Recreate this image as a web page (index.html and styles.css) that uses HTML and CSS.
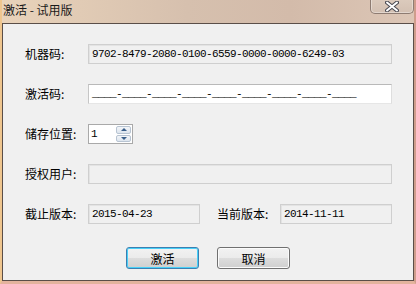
FILE: index.html
```html
<!DOCTYPE html>
<html lang="zh-CN">
<head>
    <meta charset="UTF-8">
    <title>激活 - 试用版</title>
    <link rel="stylesheet" href="styles.css">
</head>
<body>

<div class="window">
    <!-- Title bar -->
    <div class="titlebar">
        <div class="title">激活 - 试用版</div>
        <div class="close-btn">
            <svg width="14" height="11" viewBox="0 0 14 11">
                <path d="M2 1.5 L12 9.5 M12 1.5 L2 9.5" stroke="#4a4a52" stroke-width="4" stroke-linecap="round"/>
                <path d="M2 1.5 L12 9.5 M12 1.5 L2 9.5" stroke="#ffffff" stroke-width="2" stroke-linecap="round"/>
            </svg>
        </div>
    </div>

    <!-- Dialog body -->
    <div class="client">
        <div class="row">
            <label class="label">机器码:</label>
            <div class="field readonly wide">9702-8479-2080-0100-6559-0000-0000-6249-03</div>
        </div>

        <div class="row">
            <label class="label">激活码:</label>
            <div class="field edit wide">____-____-____-____-____-____-____-____-____</div>
        </div>

        <div class="row">
            <label class="label">储存位置:</label>
            <div class="spinbox">
                <div class="spin-value">1</div>
                <div class="spin-buttons">
                    <div class="spin-btn"><span class="arrow-up"></span></div>
                    <div class="spin-btn"><span class="arrow-down"></span></div>
                </div>
            </div>
        </div>

        <div class="row">
            <label class="label">授权用户:</label>
            <div class="field readonly wide"></div>
        </div>

        <div class="row">
            <label class="label">截止版本:</label>
            <div class="field readonly short">2015-04-23</div>
            <label class="label label-right">当前版本:</label>
            <div class="field readonly short">2014-11-11</div>
        </div>

        <div class="buttons">
            <button class="btn default">激活</button>
            <button class="btn">取消</button>
        </div>
    </div>
</div>

</body>
</html>
```

FILE: styles.css
```css
body {
    margin: 0;
    font-family: "Noto Sans CJK SC", "Liberation Sans", sans-serif;
    font-size: 12px;
    color: #000;
}

/* Window frame */
.window {
    width: 416px;
    height: 284px;
    display: flex;
    flex-direction: column;
    box-sizing: border-box;
    background: linear-gradient(to right, #e9d3ba 0%, #d6c0ae 45%, #d3bbaa 70%, #dcc6b6 100%);
    border-left: 2px solid #efc68f;
    border-right: 2px solid #cf9d8c;
    border-bottom: 3px solid #e4b39d;
}

.titlebar {
    height: 23px;
    display: flex;
    justify-content: space-between;
    align-items: flex-start;
    flex-shrink: 0;
}

.title {
    padding: 2px 0 0 1px;
    font-size: 12px;
    line-height: 16px;
    color: #1a1a1a;
}

.close-btn {
    width: 44px;
    height: 15px;
    margin-top: -1px;
    margin-right: 0;
    box-sizing: border-box;
    border: 1px solid #8e7c72;
    border-top: none;
    border-radius: 0 0 5px 5px;
    background: linear-gradient(to bottom, #dccbbd, #d3c0b2);
    box-shadow: inset 0 0 0 1px rgba(255, 255, 255, 0.35);
    display: flex;
    justify-content: center;
    align-items: center;
}

/* Client area */
.client {
    flex: 1;
    background-color: #f0f0f0;
    border: 1px solid #5a4e48;
    padding: 20px 0 0 22px;
}

.row {
    display: flex;
    align-items: center;
    height: 20px;
    margin-bottom: 20px;
}

.label {
    width: 63px;
    flex-shrink: 0;
    line-height: 20px;
}

.label-right {
    margin-left: 17px;
}

.field {
    height: 20px;
    box-sizing: border-box;
    border: 1px solid #cfcfcf;
    padding: 0 0 0 3px;
    font-family: "Liberation Mono", monospace;
    font-size: 11px;
    letter-spacing: -0.6px;
    line-height: 18px;
    white-space: nowrap;
    overflow: hidden;
}

.readonly {
    background-color: #f0f0f0;
    box-shadow: inset 1px 1px 0 #e3e3e3;
}

.edit {
    background-color: #ffffff;
    border-color: #b9b9b9 #dedede #e6e6e6 #c6c6c6;
}

.wide {
    width: 304px;
}

.short {
    width: 112px;
}

/* Spin box */
.spinbox {
    width: 45px;
    height: 20px;
    box-sizing: border-box;
    border: 1px solid #a9a9a9;
    background-color: #ffffff;
    display: flex;
}

.spin-value {
    flex: 1;
    padding-left: 2px;
    font-family: "Liberation Mono", monospace;
    font-size: 11px;
    line-height: 18px;
}

.spin-buttons {
    width: 15px;
    display: flex;
    flex-direction: column;
    padding: 1px 1px 1px 0;
    gap: 1px;
}

.spin-btn {
    flex: 1;
    border: 1px solid #b8c4d2;
    border-radius: 2px;
    background: linear-gradient(to bottom, #f3f5f8, #dde5ee);
    display: flex;
    justify-content: center;
    align-items: center;
}

.arrow-up {
    width: 0;
    height: 0;
    border-left: 3px solid transparent;
    border-right: 3px solid transparent;
    border-bottom: 3px solid #3a5f8a;
}

.arrow-down {
    width: 0;
    height: 0;
    border-left: 3px solid transparent;
    border-right: 3px solid transparent;
    border-top: 3px solid #3a5f8a;
}

/* Buttons */
.buttons {
    display: flex;
    justify-content: center;
    gap: 18px;
    margin: 23px 0 0 -22px;
}

.btn {
    width: 73px;
    height: 22px;
    padding: 0;
    font-family: "Noto Sans CJK SC", sans-serif;
    font-size: 12px;
    color: #000;
    border: 1px solid #707070;
    border-radius: 3px;
    background: linear-gradient(to bottom, #f2f2f2 0%, #ebebeb 50%, #dddddd 51%, #cfcfcf 100%);
    box-shadow: inset 0 0 0 1px #fbfbfb;
}

.btn.default {
    border-color: #3c7fb1;
    box-shadow: inset 0 0 0 1px #48d0f8;
}
```
